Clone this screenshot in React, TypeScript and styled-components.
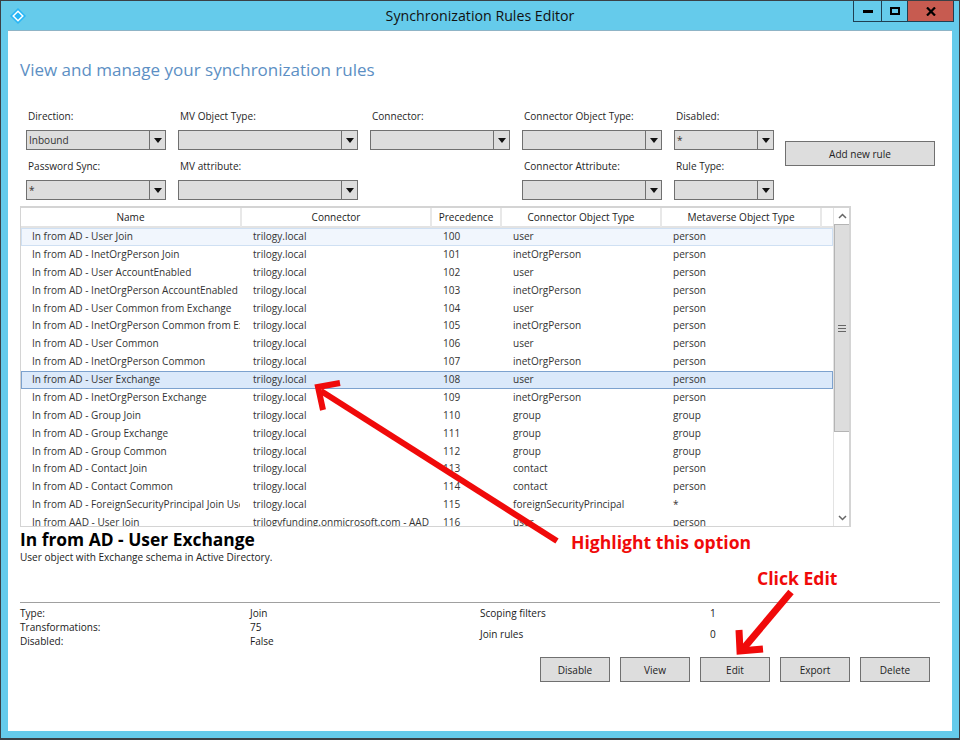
import React from "react";
import styled, { createGlobalStyle } from "styled-components";

const Global = createGlobalStyle`
  html, body { margin: 0; padding: 0; background: #65cbeb; }
  * { box-sizing: border-box; }
  body { font-family: "Open Sans", "Noto Sans", sans-serif; font-size: 10.05px; color: #1a1a1a; }
`;

const Window = styled.div`
  position: relative; width: 960px; height: 740px; background: #65cbeb;
  border: 1px solid #3a4045; border-width: 1px 1px 2px 1px; display: flex; flex-direction: column; overflow: hidden;
`;
const TitleBar = styled.div`
  height: 29px; flex: none; display: flex; align-items: flex-start; position: relative;
`;
const AppIcon = styled.svg`
  width: 16px; height: 16px; margin: 7px 0 0 9px; flex: none;
`;
const TitleText = styled.div`
  position: absolute; left: 0; right: 0; top: 5px; text-align: center; font-size: 14.2px; line-height: 20px; color: #111;
`;
const CaptionGroup = styled.div`
  position: absolute; top: 0; right: 5px; display: flex; height: 21px;
  border: 1px solid #1f3f52; border-top: 0;
`;
const CaptionButton = styled.div<{ $w: number; $close?: boolean }>`
  width: ${p => p.$w}px; display: flex; align-items: center; justify-content: center;
  background: ${p => (p.$close ? "#c75b50" : "transparent")};
  & + & { border-left: 1px solid #1f3f52; }
`;
const Client = styled.div`
  flex: 1; margin: 0 7px 7px 7px; background: #fff; border-top: 1px solid #8fb4c6;
  display: flex; flex-direction: column; padding: 0 12px;
`;
const Heading = styled.h1`
  margin: 28px 0 0 0; font-size: 17px; line-height: 22px; font-weight: 400; color: #5c8fc4; height: 22px;
`;
const FilterArea = styled.div`
  margin: 28px 0 0 6px; display: flex; height: 94px;
`;
const FilterGrid = styled.div`
  display: grid; grid-template-columns: 140px 180px 140px 140px 100px; column-gap: 12px; grid-auto-rows: 50px;
`;
const Field = styled.div`
  display: flex; flex-direction: column;
`;
const FieldLabel = styled.div`
  height: 21px; line-height: 14px; padding-left: 2px; color: #1f1f1f;
`;
const Combo = styled.div`
  height: 20px; border: 1px solid #707070; background: #dddddd; display: flex; align-items: stretch;
`;
const ComboValue = styled.div`
  flex: 1; padding-left: 2px; line-height: 19px; color: #333;
`;
const ComboButton = styled.div`
  width: 16px; border-left: 1px solid #707070; display: flex; align-items: center; justify-content: center;
  &::after { content: ""; border: 4px solid transparent; border-top: 5px solid #111; border-bottom: 0; }
`;
const Button = styled.div<{ $w: number }>`
  width: ${p => p.$w}px; height: 25px; border: 1px solid #707070; background: #dddddd;
  display: flex; align-items: center; justify-content: center; color: #222; flex: none;
`;
const AddButtonSlot = styled.div`
  margin: 32px 0 0 11px;
`;
const TableFrame = styled.div`
  margin-top: 3px; width: 831px; height: 321px; border: 1px solid #d4d4d4; border-top-width: 2px; border-right-width: 2px;
  display: flex; overflow: hidden; background: #fff; flex: none;
`;
const TableBody = styled.div`
  width: 812px; flex: none; overflow: hidden;
`;
const HeaderRow = styled.div`
  display: grid; grid-template-columns: 221px 190px 70px 160px 160px 11px; height: 20px; border-bottom: 2px solid #e3e3e3;
`;
const HeaderCell = styled.div`
  text-align: center; line-height: 19px; border-right: 2px solid #e8e8e8; color: #222;
  &:last-child { border-right: 0; }
`;
const Row = styled.div<{ $state?: "selected" | "focus" }>`
  display: grid; grid-template-columns: 221px 190px 70px 160px 171px; height: 17.875px; line-height: 17px; color: #333;
  background: ${p => (p.$state === "selected" ? "#dbe9fa" : p.$state === "focus" ? "#f1f6fd" : "transparent")};
  box-shadow: ${p => (p.$state === "selected" ? "inset 0 0 0 1px #7da2ce" : p.$state === "focus" ? "inset 0 0 0 1px #cfe0f3" : "none")};
`;
const Cell = styled.div`
  padding-left: 11px; white-space: nowrap; overflow: hidden;
  &:first-child { clip-path: inset(0 2px 0 0); }
`;
const ScrollBar = styled.div`
  width: 17px; flex: none; display: flex; flex-direction: column; border-left: 1px solid #e3e3e3;
`;
const ScrollArrow = styled.div`
  height: 16px; flex: none; display: flex; align-items: center; justify-content: center; background: #fff;
`;
const Track = styled.div`
  flex: 1; display: flex; flex-direction: column;
`;
const Thumb = styled.div`
  height: 208px; background: #dddddd; border: 1px solid #b4b4b4; display: flex; align-items: center; justify-content: center;
`;
const Grip = styled.div`
  width: 8px; height: 7px;
  background: repeating-linear-gradient(to bottom, #666 0 1px, transparent 1px 3px);
`;
const DetailTitle = styled.h2`
  margin: 2px 0 0 0; font-size: 17.4px; line-height: 21px; font-weight: 700; color: #000;
`;
const DetailText = styled.div`
  line-height: 15px; color: #222; height: 15px;
`;
const Rule = styled.div`
  margin-top: 37px; height: 1px; background: #a0a0a0; width: 920px; flex: none;
`;
const InfoArea = styled.div`
  display: grid; grid-template-columns: 230px 230px 230px 230px; margin-top: 3px; height: 51px; flex: none;
`;
const InfoColumn = styled.div<{ $line: number }>`
  line-height: ${p => p.$line}px;
  margin-top: ${p => (p.$line > 14 ? -3.5 : 0)}px;
`;
const Actions = styled.div`
  display: flex; gap: 10px; padding-left: 520px;
`;
const AnnotationLayer = styled.svg`
  position: absolute; left: -1px; top: -1px; width: 960px; height: 740px; pointer-events: none;
`;
const Callout = styled.div<{ $x: number; $y: number }>`
  position: absolute; left: ${p => p.$x}px; top: ${p => p.$y}px; color: #f00a0a; font-weight: 700; font-size: 17.6px; line-height: 24px; white-space: nowrap;
`;

const rows: [string, string, string, string, string][] = [
  ["In from AD - User Join", "trilogy.local", "100", "user", "person"],
  ["In from AD - InetOrgPerson Join", "trilogy.local", "101", "inetOrgPerson", "person"],
  ["In from AD - User AccountEnabled", "trilogy.local", "102", "user", "person"],
  ["In from AD - InetOrgPerson AccountEnabled", "trilogy.local", "103", "inetOrgPerson", "person"],
  ["In from AD - User Common from Exchange", "trilogy.local", "104", "user", "person"],
  ["In from AD - InetOrgPerson Common from Exchange", "trilogy.local", "105", "inetOrgPerson", "person"],
  ["In from AD - User Common", "trilogy.local", "106", "user", "person"],
  ["In from AD - InetOrgPerson Common", "trilogy.local", "107", "inetOrgPerson", "person"],
  ["In from AD - User Exchange", "trilogy.local", "108", "user", "person"],
  ["In from AD - InetOrgPerson Exchange", "trilogy.local", "109", "inetOrgPerson", "person"],
  ["In from AD - Group Join", "trilogy.local", "110", "group", "group"],
  ["In from AD - Group Exchange", "trilogy.local", "111", "group", "group"],
  ["In from AD - Group Common", "trilogy.local", "112", "group", "group"],
  ["In from AD - Contact Join", "trilogy.local", "113", "contact", "person"],
  ["In from AD - Contact Common", "trilogy.local", "114", "contact", "person"],
  ["In from AD - ForeignSecurityPrincipal Join User", "trilogy.local", "115", "foreignSecurityPrincipal", "*"],
  ["In from AAD - User Join", "trilogyfunding.onmicrosoft.com - AAD", "116", "user", "person"],
];

const filters: [string, string][] = [
  ["Direction:", "Inbound"],
  ["MV Object Type:", ""],
  ["Connector:", ""],
  ["Connector Object Type:", ""],
  ["Disabled:", "*"],
  ["Password Sync:", "*"],
  ["MV attribute:", ""],
  ["", ""],
  ["Connector Attribute:", ""],
  ["Rule Type:", ""],
];

const headers = ["Name", "Connector", "Precedence", "Connector Object Type", "Metaverse Object Type", ""];

export default function App() {
  return (
    <>
      <Global />
      <Window>
        <TitleBar>
          <AppIcon viewBox="0 0 16 16">
            <path d="M8 0 L16 8 L8 16 L0 8 Z" fill="#29b6f6" />
            <path d="M8 3.2 L12.8 8 L8 12.8 L3.2 8 Z" fill="none" stroke="#ffffff" strokeWidth="1.5" />
            <circle cx="8" cy="8" r="1.5" fill="#29b6f6" />
          </AppIcon>
          <TitleText>Synchronization Rules Editor</TitleText>
          <CaptionGroup>
            <CaptionButton $w={27}>
              <svg width="10" height="3" viewBox="0 0 10 3"><rect width="10" height="3" y="0" fill="#000" /></svg>
            </CaptionButton>
            <CaptionButton $w={26}>
              <svg width="10" height="8" viewBox="0 0 10 8"><rect x="1" y="1" width="8" height="6" fill="none" stroke="#000" strokeWidth="2" /></svg>
            </CaptionButton>
            <CaptionButton $close $w={46}>
              <svg width="10" height="9" viewBox="0 0 10 9"><path d="M1 0.5 L9 8.5 M9 0.5 L1 8.5" stroke="#000" strokeWidth="2.2" /></svg>
            </CaptionButton>
          </CaptionGroup>
        </TitleBar>
        <Client>
          <Heading>View and manage your synchronization rules</Heading>
          <FilterArea>
            <FilterGrid>
              {filters.map(([label, value], i) => (
                <Field key={i}>
                  {label && <FieldLabel>{label}</FieldLabel>}
                  {label === "" ? (
                    <span />
                  ) : (
                    <Combo>
                      <ComboValue>{value}</ComboValue>
                      <ComboButton />
                    </Combo>
                  )}
                </Field>
              ))}
            </FilterGrid>
            <AddButtonSlot>
              <Button $w={150}>Add new rule</Button>
            </AddButtonSlot>
          </FilterArea>
          <TableFrame>
            <TableBody>
              <HeaderRow>
                {headers.map((h, i) => (
                  <HeaderCell key={i}>{h}</HeaderCell>
                ))}
              </HeaderRow>
              {rows.map((r, i) => (
                <Row key={i} $state={i === 8 ? "selected" : i === 0 ? "focus" : undefined}>
                  {r.map((c, j) => (
                    <Cell key={j}>{c}</Cell>
                  ))}
                </Row>
              ))}
            </TableBody>
            <ScrollBar>
              <ScrollArrow>
                <svg width="9" height="6" viewBox="0 0 9 6"><path d="M1 5 L4.5 1.5 L8 5" fill="none" stroke="#666" strokeWidth="1.5" /></svg>
              </ScrollArrow>
              <Track>
                <Thumb><Grip /></Thumb>
              </Track>
              <ScrollArrow>
                <svg width="9" height="6" viewBox="0 0 9 6"><path d="M1 1 L4.5 4.5 L8 1" fill="none" stroke="#666" strokeWidth="1.5" /></svg>
              </ScrollArrow>
            </ScrollBar>
          </TableFrame>
          <DetailTitle>In from AD - User Exchange</DetailTitle>
          <DetailText>User object with Exchange schema in Active Directory.</DetailText>
          <Rule />
          <InfoArea>
            <InfoColumn $line={14}>Type:<br />Transformations:<br />Disabled:</InfoColumn>
            <InfoColumn $line={14}>Join<br />75<br />False</InfoColumn>
            <InfoColumn $line={21}>Scoping filters<br />Join rules</InfoColumn>
            <InfoColumn $line={21}>1<br />0</InfoColumn>
          </InfoArea>
          <Actions>
            {["Disable", "View", "Edit", "Export", "Delete"].map(b => (
              <Button key={b} $w={70}>{b}</Button>
            ))}
          </Actions>
        </Client>
        <AnnotationLayer viewBox="0 0 960 740">
          <g stroke="#f00a0a" strokeWidth="6" fill="none">
            <path d="M557 541 L321 391" />
            <path d="M340 383 L318 387 L323 410" />
            <path d="M791 592 L743 649" strokeWidth="7" />
            <path d="M739 630 L740 651 L763 649" strokeWidth="7" />
          </g>
        </AnnotationLayer>
        <Callout $x={570} $y={529}>Highlight this option</Callout>
        <Callout $x={756} $y={565}>Click Edit</Callout>
      </Window>
    </>
  );
}
